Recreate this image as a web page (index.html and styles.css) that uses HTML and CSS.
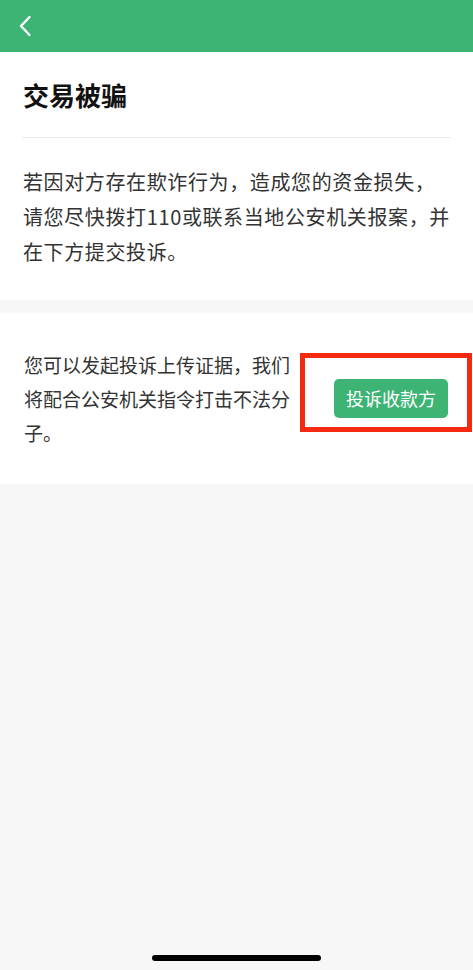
FILE: index.html
```html
<!DOCTYPE html>
<html lang="zh-CN">
<head>
<meta charset="utf-8">
<title>交易被骗</title>
<link rel="stylesheet" href="styles.css">
</head>
<body>
<div class="page">
  <header class="topbar">
    <svg class="back" width="14" height="22" viewBox="0 0 14 22"><path d="M11.5 2 L3 11 L11.5 20" fill="none" stroke="#fff" stroke-width="2.4" stroke-linecap="round" stroke-linejoin="round"/></svg>
  </header>
  <section class="card intro">
    <h1 class="title">交易被骗</h1>
    <div class="divider"></div>
    <p class="desc">若因对方存在欺诈行为，造成您的资金损失，请您尽快拨打110或联系当地公安机关报案，并在下方提交投诉。</p>
  </section>
  <section class="card action">
    <p class="action-text">您可以发起投诉上传证据，我们将配合公安机关指令打击不法分子。</p>
    <button class="btn">投诉收款方</button>
    <div class="highlight"></div>
  </section>
  <div class="home-indicator"></div>
</div>
</body>
</html>
```
FILE: styles.css
```css
* { box-sizing: border-box; }
html, body { margin: 0; padding: 0; }
body {
  background: #f7f7f7;
  font-family: "Noto Sans CJK SC", "Noto Sans", sans-serif;
  width: 473px;
  height: 970px;
  overflow: hidden;
}
.page { position: relative; height: 970px; }
.topbar {
  height: 52px;
  background: #3db474;
  display: flex;
  align-items: center;
  padding-left: 18px;
}
.back { display: block; margin-top: -1px; }
.card { background: #fff; }
.intro { padding: 0 22px 31px; }
.title {
  margin: 0;
  padding: 25px 0 24px 1px;
  font-size: 26px;
  line-height: 36px;
  font-weight: 700;
  color: #111;
}
.divider { height: 1px; background: #ececec; }
.desc {
  margin: 26px 0 0 1px;
  font-size: 20px;
  letter-spacing: 0.62px;
  line-height: 35px;
  color: #333;
}
.action {
  margin-top: 13px;
  position: relative;
  display: flex;
  align-items: center;
  justify-content: space-between;
  padding: 35px 25px 34px 24px;
}
.action-text {
  margin: 0;
  width: 272px;
  font-size: 19px;
  line-height: 34px;
  color: #333;
}
.btn {
  border: none;
  background: #3db474;
  color: #fff;
  font-family: inherit;
  font-size: 18px;
  line-height: 39px;
  height: 39px;
  padding: 0 12px;
  border-radius: 5px;
  margin-top: -1px;
}
.highlight {
  position: absolute;
  left: 300px;
  top: 40px;
  width: 172px;
  height: 79px;
  border: 5px solid #f42a10;
}
.home-indicator {
  position: absolute;
  left: 152px;
  bottom: 9px;
  width: 169px;
  height: 6px;
  border-radius: 3px;
  background: #000;
}
```
